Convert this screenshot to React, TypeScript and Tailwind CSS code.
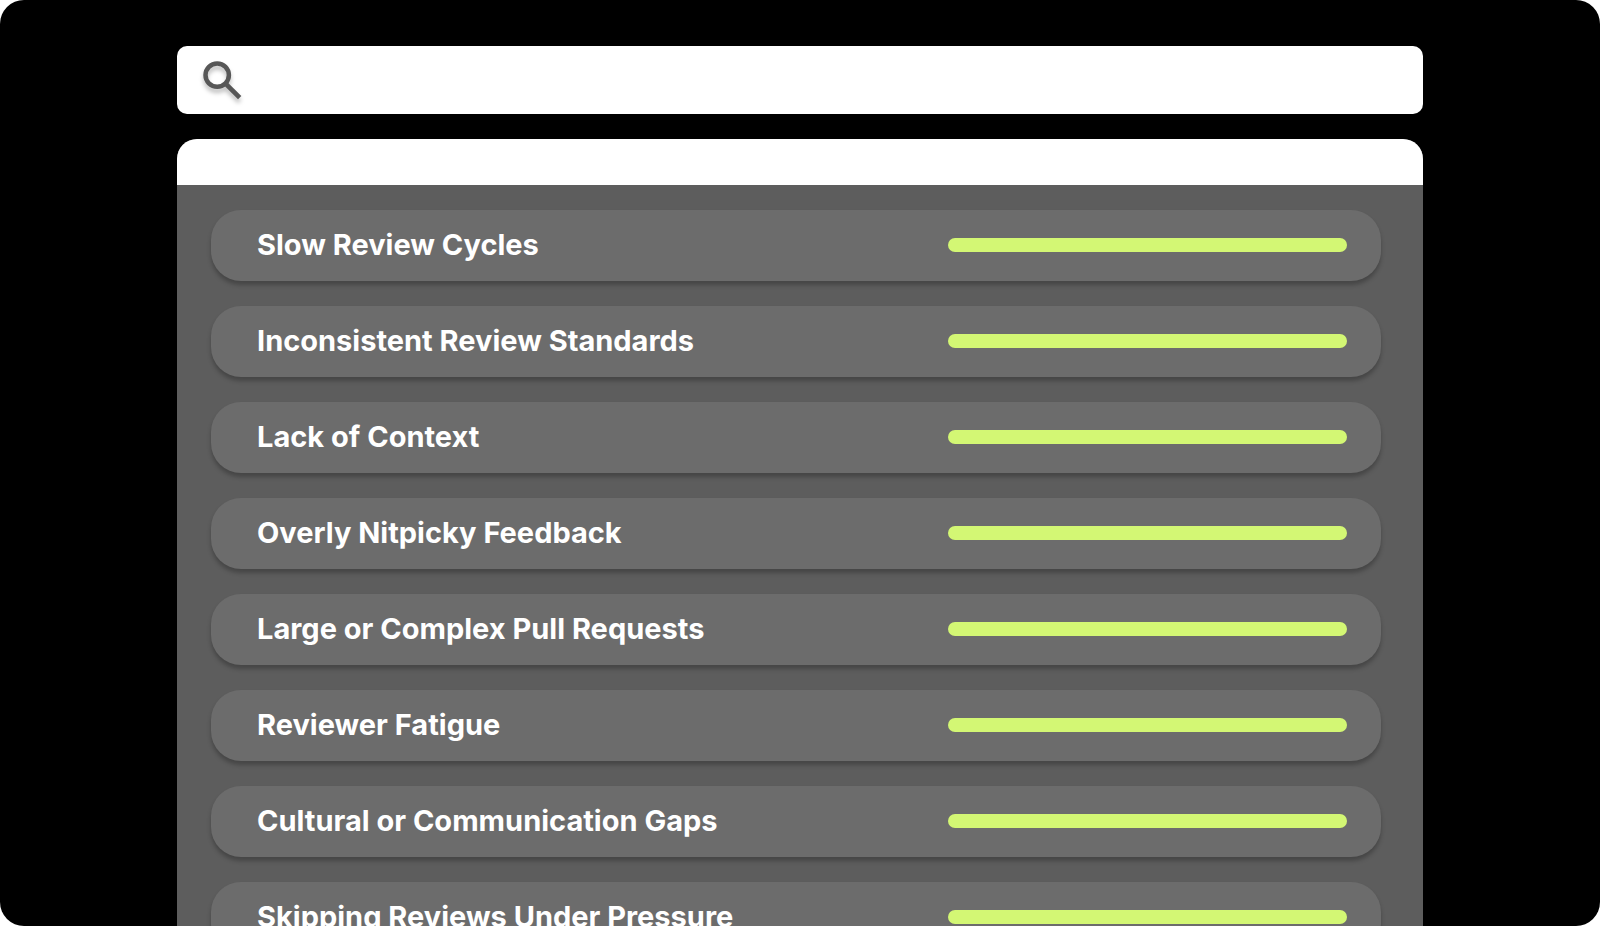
import React from "react";

const issues = [
  "Slow Review Cycles",
  "Inconsistent Review Standards",
  "Lack of Context",
  "Overly Nitpicky Feedback",
  "Large or Complex Pull Requests",
  "Reviewer Fatigue",
  "Cultural or Communication Gaps",
  "Skipping Reviews Under Pressure",
];

const SearchIcon = () => (
  <svg
    className="h-10 w-10 shrink-0 drop-shadow-[0_4px_2px_rgba(0,0,0,0.25)]"
    viewBox="0 0 40 40"
    fill="none"
    stroke="#575757"
    aria-hidden="true"
  >
    <circle cx="15.2" cy="15.1" r="11.7" strokeWidth="4.5" />
    <path d="M23.3 23.3L37.7 37.7" strokeWidth="4.7" />
  </svg>
);

const SearchBar = () => (
  <label className="flex h-[68px] items-center gap-4 rounded-[10px] bg-white px-[25px]">
    <SearchIcon />
    <input
      type="search"
      aria-label="Search"
      className="h-full min-w-0 flex-1 bg-transparent text-2xl text-[#5a5a5a] outline-none"
    />
  </label>
);

const IssueRow = ({ title }: { title: string }) => (
  <li className="flex min-h-[71px] items-center justify-between gap-6 rounded-[30px] bg-[#6c6c6c] pr-[34px] pb-[2px] pl-[46px] shadow-[0_4px_4px_rgba(0,0,0,0.25)]">
    <span className="text-[29px] leading-9 font-bold text-white">{title}</span>
    <div className="h-[14px] w-[399px] shrink rounded-full bg-[#d3f774]" />
  </li>
);

const App = () => {
  return (
    <main className="h-screen overflow-hidden rounded-[24px] bg-black px-4 pt-[46px] font-['Inter',sans-serif]">
      <div className="mx-auto max-w-[1246px]">
        <SearchBar />
        <section className="mt-[25px] overflow-hidden rounded-t-[20px] bg-[#5d5d5d]">
          <div className="h-[46px] bg-white" />
          <ul className="flex flex-col gap-[25px] py-[25px] pr-[42px] pl-[34px]">
            {issues.map((title) => (
              <IssueRow key={title} title={title} />
            ))}
          </ul>
        </section>
      </div>
    </main>
  );
};

export default App;
